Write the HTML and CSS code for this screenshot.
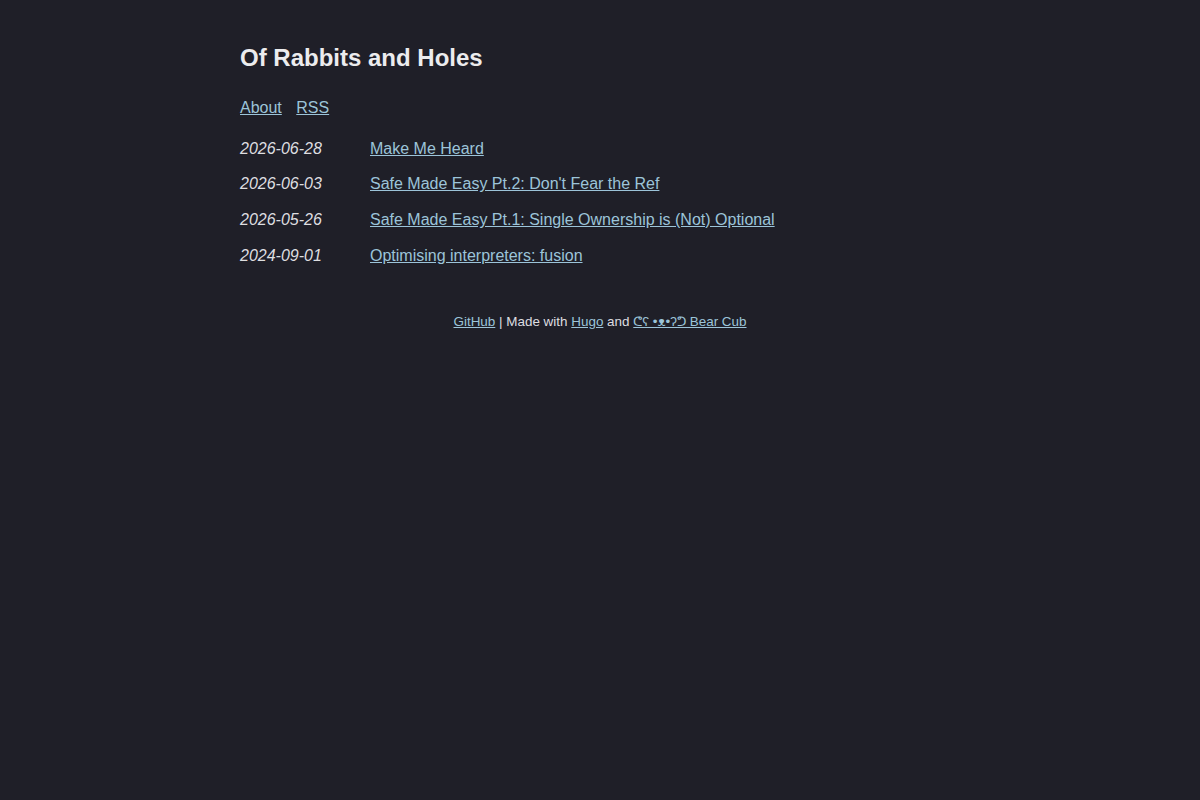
FILE: index.html
```html
<!DOCTYPE html>
<html lang="en">
<head>
<meta charset="utf-8">
<title>Of Rabbits and Holes</title>
<link rel="stylesheet" href="styles.css">
</head>
<body>
<header>
  <a href="#" class="title"><h2>Of Rabbits and Holes</h2></a>
  <nav><p><a href="#">About</a> <a href="#">RSS</a></p></nav>
</header>
<main>
  <ul class="blog-posts">
    <li><span><i><time>2026-06-28</time></i></span><a href="#">Make Me Heard</a></li>
    <li><span><i><time>2026-06-03</time></i></span><a href="#">Safe Made Easy Pt.2: Don't Fear the Ref</a></li>
    <li><span><i><time>2026-05-26</time></i></span><a href="#">Safe Made Easy Pt.1: Single Ownership is (Not) Optional</a></li>
    <li><span><i><time>2024-09-01</time></i></span><a href="#">Optimising interpreters: fusion</a></li>
  </ul>
</main>
<footer>
  <a href="#">GitHub</a> | Made with <a href="#">Hugo</a> and <a href="#">ᕦʕ •ᴥ•ʔᕤ Bear Cub</a>
</footer>
</body>
</html>
```

FILE: styles.css
```css
html {
  background: #1f1f28;
}
body {
  font-family: "Liberation Sans", Arial, sans-serif;
  font-size: 16px;
  line-height: 1.5;
  margin: 0 auto;
  padding: 20px;
  max-width: 720px;
  color: #dedee0;
  background: #1f1f28;
}
a {
  color: #9cc4d9;
}
.title {
  text-decoration: none;
}
.title h2 {
  font-size: 1.5em;
  margin: 0.83em 0;
  color: #ececee;
}
nav p {
  margin: 16px 0;
}
nav a {
  margin-right: 10px;
}
.blog-posts {
  list-style: none;
  padding: 0;
  margin: 17px 0 16px;
  display: flex;
  flex-direction: column;
  gap: 11.67px;
}
.blog-posts li {
  display: flex;
}
.blog-posts li span {
  flex: 0 0 130px;
}
footer {
  padding: 28px 0 25px;
  text-align: center;
  font-size: 13.45px;
  color: #dedee0;
}
```
